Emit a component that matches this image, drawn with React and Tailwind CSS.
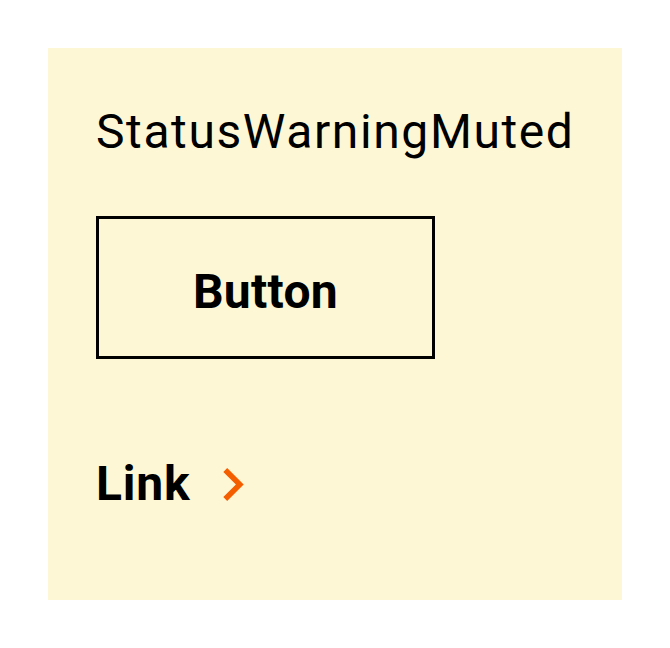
const ChevronRight = () => (
  <svg width="21" height="33" viewBox="8.59 6 7.41 12" className="text-[#f45d00]">
    <path d="M10 6L8.59 7.41 13.17 12l-4.58 4.59L10 18l6-6z" fill="currentColor" />
  </svg>
);

const App = () => {
  return (
    <div className="min-h-screen bg-white p-12" style={{ fontFamily: "Roboto, 'Liberation Sans', sans-serif" }}>
      <div className="bg-[#fef7d6] h-[552px] px-12 pt-12 flex flex-col items-start">
        <h1 className="text-[48px] leading-[72px] font-normal text-black tracking-[1.6px]">
          StatusWarningMuted
        </h1>

        <button className="mt-12 w-[339px] h-[143px] pt-2 border-[3px] border-black flex items-center justify-center text-[48px] font-bold text-black tracking-[0.3px]">
          Button
        </button>

        <a href="#" className="mt-[89px] flex items-center gap-[33px] text-[48px] leading-[72px] font-bold text-black tracking-[0.8px]">
          Link
          <ChevronRight />
        </a>
      </div>
    </div>
  );
};

export default App;
